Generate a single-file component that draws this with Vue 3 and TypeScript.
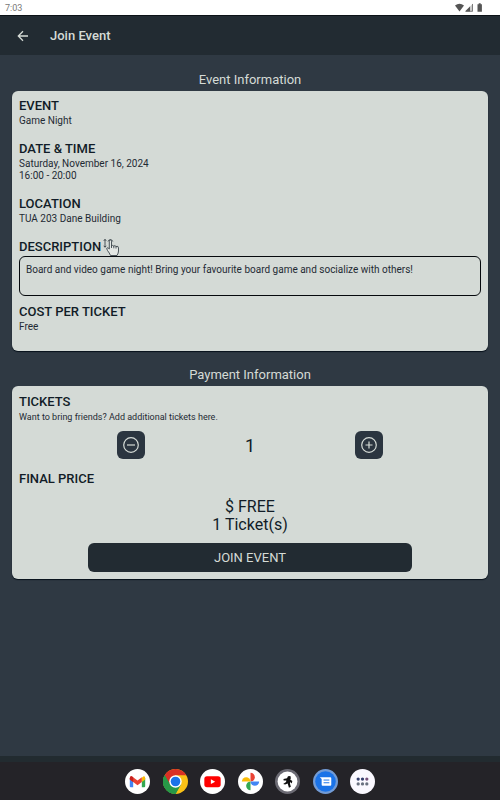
<script setup lang="ts">
import { computed, ref } from 'vue'

interface Detail {
  label: string
  lines: string[]
  boxed?: boolean
}

const details: Detail[] = [
  { label: 'EVENT', lines: ['Game Night'] },
  { label: 'DATE & TIME', lines: ['Saturday, November 16, 2024', '16:00 - 20:00'] },
  { label: 'LOCATION', lines: ['TUA 203 Dane Building'] },
  {
    label: 'DESCRIPTION',
    lines: ['Board and video game night! Bring your favourite board game and socialize with others!'],
    boxed: true,
  },
  { label: 'COST PER TICKET', lines: ['Free'] },
]

const tickets = ref(1)
const ticketLine = computed(() => `${tickets.value} Ticket(s)`)

function change(step: number): void {
  tickets.value = Math.max(1, tickets.value + step)
}
</script>

<template>
  <div class="screen">
    <div class="status">
      <span>7:03</span>
      <svg class="status-icons" viewBox="0 0 30 10" aria-hidden="true">
        <path d="M0 2.6Q4.500-1 9 2.600L4.500 8.500Z" fill="#555" />
        <path d="M18 .5V8.500H10Z" fill="#ccc" />
        <path d="M15 3.500V8.500H10Z" fill="#555" />
        <path d="M17.500 1V8.300H11" fill="none" stroke="#666" stroke-width=".8" />
        <path d="M22.500 1.300h1.200V.300h2v1h1.200v7.400h-4.400z" fill="#555" />
      </svg>
    </div>

    <header class="bar">
      <button class="back" type="button" aria-label="Back">
        <svg viewBox="0 0 12 12"><path d="M11 6H1.500M6 1.300 1.300 6 6 10.700" /></svg>
      </button>
      <h1>Join Event</h1>
    </header>

    <main>
      <h2>Event Information</h2>
      <section class="card details">
        <div v-for="d in details" :key="d.label" class="detail">
          <h3>
            {{ d.label }}
            <svg v-if="d.boxed" class="pointer" viewBox="0 0 17 19" aria-hidden="true">
              <path d="M2 1.500V9M.800 2.800 2 1.300 3.200 2.800M.800 7.800 2 9.300 3.200 7.800" />
              <path d="M5 3.500A2.500 2.500 0 0 1 9.800 3.500" />
              <path
                class="hand"
                d="M6.300 11V3.200Q6.300 2 7.400 2T8.500 3.200V8Q9.500 6.800 10.700 8Q12 7 13 8.500Q15.500 7.500 15.500 10V13Q15.500 15 14 17.500H7.500Q6.500 15 4.500 12.500Q3 10 4.200 9.800Q5.200 9.700 6.300 11ZM8.500 8V10M10.800 8V10.300M13 8.500V10.500"
              />
            </svg>
          </h3>
          <div :class="{ box: d.boxed }">
            <p v-for="line in d.lines" :key="line">{{ line }}</p>
          </div>
        </div>
      </section>

      <h2>Payment Information</h2>
      <section class="card">
        <h3>TICKETS</h3>
        <p class="hint">Want to bring friends? Add additional tickets here.</p>
        <div class="stepper">
          <button type="button" aria-label="Remove a ticket" @click="change(-1)">
            <svg viewBox="0 0 16 16"><circle cx="8" cy="8" r="7.300" /><path d="M4 8H12" /></svg>
          </button>
          <output>{{ tickets }}</output>
          <button type="button" aria-label="Add a ticket" @click="change(1)">
            <svg viewBox="0 0 16 16"><circle cx="8" cy="8" r="7.300" /><path d="M4.500 8H11.500M8 4.500V11.500" /></svg>
          </button>
        </div>
        <h3>FINAL PRICE</h3>
        <div class="price">
          <div>$ FREE</div>
          <div>{{ ticketLine }}</div>
        </div>
        <button class="join" type="button">JOIN EVENT</button>
      </section>
    </main>

    <nav class="dock" aria-label="Apps">
      <div class="apps">
        <button type="button" aria-label="Gmail">
          <svg viewBox="0 0 26 26">
            <circle cx="13" cy="13" r="13" fill="#fff" />
            <path d="M5 9.500 8.500 12V19H6Q5 19 5 18Z" fill="#4285f4" />
            <path d="M21 9.500 17.500 12V19H20Q21 19 21 18Z" fill="#34a853" />
            <path d="M17.500 9 19 7.700Q21 7 21 9.500V11L17.500 13.500Z" fill="#fbbc04" />
            <path d="M5 11V9.500Q5 7 7 7.500L13 12 17.500 8.600V13.500L13 17 8.500 13.500Z" fill="#ea4335" />
            <path d="M5 11V9.500Q5 7 7 7.500L8.500 8.700V13.500Z" fill="#c5221f" />
          </svg>
        </button>
        <button type="button" aria-label="Chrome">
          <svg viewBox="0 0 26 26">
            <circle cx="13" cy="13" r="13" fill="#fbc116" />
            <path d="M13 13 1.740 6.500A13 13 0 0 0 13 26L18.600 16.200Z" fill="#279847" />
            <path d="M1.740 6.500A13 13 0 0 1 24.260 6.500H13L7.400 16.200Z" fill="#d93025" />
            <path d="M1.740 6.500A13 13 0 0 0 13 26L18.600 16.200H7.400Z" fill="#279847" />
            <circle cx="13" cy="13" r="6.500" fill="#fff" />
            <circle cx="13" cy="13" r="5" fill="#1a73e8" />
          </svg>
        </button>
        <button type="button" aria-label="YouTube">
          <svg viewBox="0 0 26 26">
            <circle cx="13" cy="13" r="13" fill="#fff" />
            <rect x="4.500" y="7.500" width="17" height="11.500" rx="2.800" fill="#f00" />
            <path d="M11.300 10.700 15.800 13.200 11.300 15.700Z" fill="#fff" />
          </svg>
        </button>
        <button type="button" aria-label="Photos">
          <svg viewBox="0 0 26 26">
            <circle cx="13" cy="13" r="13" fill="#fff" />
            <path d="M13 4A4.500 4.500 0 0 1 13 13Z" fill="#ea4335" />
            <path d="M22 13A4.500 4.500 0 0 1 13 13Z" fill="#4285f4" />
            <path d="M13 22A4.500 4.500 0 0 1 13 13Z" fill="#34a853" />
            <path d="M4 13A4.500 4.500 0 0 1 13 13Z" fill="#fbbc04" />
          </svg>
        </button>
        <button type="button" aria-label="Runner">
          <svg viewBox="0 0 26 26">
            <circle cx="13" cy="13" r="13" fill="#6c6b74" />
            <circle cx="13" cy="13" r="10.300" fill="#fff" />
            <path
              d="M13.500 7.500 16 7.200 16.500 9.500 15.800 11 18 12.500 17.500 15 16 13.500 15.500 15 16.500 18.500 14.500 19.500 13.200 15 10.500 16 8.500 15.500 11.500 13.500 11.800 12 9 12 8.800 10.500 12.500 9.500Z"
              fill="#111"
            />
          </svg>
        </button>
        <button type="button" aria-label="Messages">
          <svg viewBox="0 0 26 26">
            <circle cx="13" cy="13" r="13" fill="#729bd5" />
            <circle cx="13" cy="13" r="10.700" fill="#1a73e8" />
            <path d="M7 8.500H18Q19 8.500 19 9.500V16.500Q19 17.500 18 17.500H10Q9 17.500 9 16.500V10.500Z" fill="#fff" />
            <path d="M11 11.500H17M11 14.300H17" stroke="#1a73e8" stroke-width="1" />
          </svg>
        </button>
        <button type="button" aria-label="All apps">
          <svg viewBox="0 0 26 26">
            <circle cx="13" cy="13" r="13" fill="#faf8ff" />
            <g fill="#36406e">
              <circle cx="8.500" cy="10.500" r="1.700" /><circle cx="13" cy="10.500" r="1.700" />
            </g>
            <circle cx="17.500" cy="10.500" r="1.700" fill="#76507a" />
            <g fill="#69707f">
              <circle cx="8.500" cy="15.500" r="1.700" /><circle cx="13" cy="15.500" r="1.700" />
              <circle cx="17.500" cy="15.500" r="1.700" />
            </g>
          </svg>
        </button>
      </div>
    </nav>
  </div>
</template>

<style>
body {
  margin: 0;
  background: #2f3943;
}
</style>

<style scoped>
.screen {
  display: flex;
  flex-direction: column;
  min-height: 100vh;
  background: #2f3943;
  color: #111c27;
  font-family: Roboto, 'Liberation Sans', sans-serif;
}
h1,
h2,
h3,
p {
  margin: 0;
}
button {
  padding: 0;
  border: 0;
  background: none;
  font-family: inherit;
  cursor: pointer;
}
svg {
  display: block;
}
.status {
  display: flex;
  align-items: center;
  justify-content: space-between;
  height: 15px;
  padding: 0 15px 0 5px;
  background: #fff;
  color: #777;
  font-size: 9px;
}
.status-icons {
  width: 30px;
  height: 10px;
}
.bar {
  display: flex;
  align-items: center;
  gap: 21px;
  height: 40px;
  padding: 0 17px;
  border-top: 1px solid #0c1217;
  box-sizing: border-box;
  background: #222b32;
  color: #d5dbd6;
}
.back svg {
  width: 12px;
  height: 12px;
  fill: none;
  stroke: #d5dbd6;
  stroke-width: 1.3;
}
h1 {
  font-size: 13px;
  font-weight: 500;
}
main {
  flex: 1;
  padding: 16px 12px;
}
h2 {
  color: #d5dbd6;
  font-size: 13px;
  font-weight: 400;
  line-height: 18px;
  text-align: center;
  padding-bottom: 2px;
}
.card {
  padding: 7px;
  border-radius: 6px;
  background: #d4dad6;
  box-shadow: 0 1px 1px #07111b;
}
.details {
  margin-bottom: 15px;
  padding-top: 6px;
  padding-bottom: 18px;
}
.detail + .detail {
  margin-top: 13px;
}
h3 {
  display: flex;
  align-items: center;
  gap: 2px;
  font-size: 13px;
  font-weight: 500;
  line-height: 18px;
}
p {
  color: #1f2a34;
  font-size: 10px;
  line-height: 12px;
}
.box {
  min-height: 40px;
  padding: 7px 6px;
  border: 1px solid #05090d;
  border-radius: 6px;
  box-sizing: border-box;
}
.detail:has(.box) + .detail {
  margin-top: 7px;
}
.pointer {
  width: 17px;
  height: 19px;
  margin: -2px 0;
  fill: none;
  stroke: #28323a;
  stroke-width: 0.8;
}
.hand {
  fill: #e3e7e4;
}
.hint {
  font-size: 9px;
}
.stepper {
  display: grid;
  grid-template-columns: repeat(3, 1fr);
  align-items: center;
  justify-items: center;
  width: 77%;
  margin: 8px auto 11px;
}
.stepper button {
  display: grid;
  place-items: center;
  width: 28px;
  height: 28px;
  border-radius: 6px;
  background: #2b3540;
}
.stepper svg {
  width: 16px;
  height: 16px;
  fill: none;
  stroke: #d5dbd6;
  stroke-width: 1.2;
}
.stepper output {
  font-size: 18px;
}
.price {
  margin: 10px 0 9px;
  font-size: 16px;
  line-height: 18px;
  text-align: center;
}
.join {
  display: block;
  width: 70%;
  height: 29px;
  margin: 0 auto;
  border-radius: 6px;
  background: #222b32;
  color: #d5dbd6;
  font-size: 13px;
}
.dock {
  display: flex;
  align-items: center;
  justify-content: center;
  height: 38px;
  border-top: 6px solid #222b30;
  background: #242328;
}
.apps {
  display: flex;
  justify-content: space-between;
  width: 50%;
}
.dock svg {
  width: 25px;
  height: 25px;
}
</style>
